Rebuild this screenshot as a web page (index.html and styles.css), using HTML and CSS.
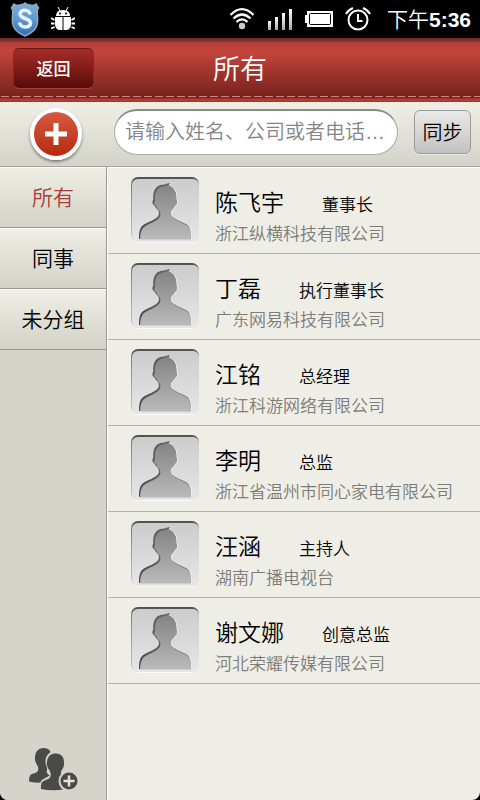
FILE: index.html
```html
<!DOCTYPE html>
<html lang="zh-CN">
<head>
<meta charset="utf-8">
<meta name="viewport" content="width=device-width, initial-scale=1">
<title>所有</title>
<link rel="stylesheet" href="styles.css">
</head>
<body>
<svg class="defs" aria-hidden="true">
  <defs>
    <linearGradient id="frame" x1="0" y1="0" x2="0" y2="1"><stop offset="0" stop-color="#cccccd"/><stop offset="1" stop-color="#e6e6e7"/></linearGradient>
    <linearGradient id="rim" x1="0" y1="0" x2="0" y2="1"><stop offset="0" stop-color="#4c4e4a"/><stop offset=".12" stop-color="#7f807f"/><stop offset="1" stop-color="#c8c8cb"/></linearGradient>
    <linearGradient id="person" x1="0" y1="0" x2="0" y2="1"><stop offset="0" stop-color="#848484"/><stop offset="1" stop-color="#bababb"/></linearGradient>
    <linearGradient id="edge" x1="0" y1="0" x2="1" y2="0"><stop offset="0" stop-color="#4a4a4a"/><stop offset=".6" stop-color="#6a6a6a"/><stop offset="1" stop-color="#8b8b8b"/></linearGradient>
    <linearGradient id="shield" x1="0" y1="0" x2="0" y2="1"><stop offset="0" stop-color="#79aedb"/><stop offset=".5" stop-color="#5f98d0"/><stop offset="1" stop-color="#2f6bb2"/></linearGradient>
    <linearGradient id="bars" x1="0" y1="0" x2="0" y2="1"><stop offset="0" stop-color="#fff"/><stop offset="1" stop-color="#aaa"/></linearGradient>
    <path id="bust" d="M8 62 C8 54 9 50 13 47.500 C19 44 27 42 28 37 Q28.500 34 26 32 Q24 30 23.500 28.500 C21 27.500 21 24 22.300 23 C21.500 12 26 7.500 33 7.500 Q36 6 39.500 6 L37.500 8.500 C43.500 10.500 45.800 16 45.300 23 C46.500 24 46 28 44 28.500 Q43 31 41 32.500 Q39 34 39.500 37 C41 42 50 44 56 47.500 C59.500 50 60 55 60 62 Z"/>
    <symbol id="avatar" viewBox="0 0 68 66">
      <rect x="0" y="1" width="68" height="65" rx="7" fill="#fafaf7"/>
      <rect x="0" y="0" width="68" height="65" rx="7" fill="url(#rim)"/>
      <rect x="1" y="2" width="67" height="63" rx="6" fill="url(#frame)"/>
      <use href="#bust" x="1" y="0" fill="#f0f0f1"/>
      <use href="#bust" fill="url(#edge)"/>
      <path d="M9 62.500 C9.500 55 10.500 51.500 14.500 49 C20.500 45.500 28.500 43.500 29.500 38 Q30 35 27.500 33 Q25.500 31 25 29 C22.800 28 22.800 25 24 24 C23 14 27 9.500 34 9 Q37 8 38 8.500 C43.500 10.500 45.800 16 45.300 23 C46.500 24 46 28 44 28.500 Q43 31 41 32.500 Q39 34 39.500 37 C41 42.500 50 45 55.500 48.500 C59.500 51 60 56 60 62.500 Z" fill="url(#person)"/>
    </symbol>
  </defs>
</svg>

<div class="status">
  <svg width="30" height="36" viewBox="0 0 30 36" aria-hidden="true">
    <path d="M4 3 Q7 5 10 4 Q13 4 15 2 Q17 4 20 4 Q23 5 26 3 L28.500 7 Q26.500 9 27.500 15 C28.500 25 26 30 15 35 C4 30 1.500 25 2.500 15 Q3.500 9 1.500 7 Z" fill="url(#shield)" stroke="#92a9bb" stroke-width="1.500"/>
    <path d="M20 13.500 C20 8 10 8 10 13 C10 18 20.500 17 20.500 22 C20.500 27.500 10 27.500 9.500 21.500" fill="none" stroke="#e9f1f8" stroke-width="3.600"/>
  </svg>
  <svg class="bug" width="24" height="24" viewBox="0 0 24 24" fill="#fff" aria-hidden="true">
    <path d="M5 9 Q5 3 12 3 Q19 3 19 9 Z"/><path d="M4 10 H11.500 V23 H8 Q4 22 4 17 Z M12.500 10 H20 V17 Q20 22 16 23 H12.500 Z"/>
    <path d="M7 0 L9 4 M17 0 L15 4" fill="none" stroke="#fff"/>
    <path d="M3.500 13 L0 11 M3.500 16.500 H0 M3.500 20 L0 21.500 M20.500 13 L24 11 M20.500 16.500 H24 M20.500 20 L24 21.500" fill="none" stroke="#fff" stroke-width="1.800"/>
    <circle cx="9" cy="6.500" r="1" fill="#000"/><circle cx="15" cy="6.500" r="1" fill="#000"/>
  </svg>
  <div class="signals">
    <svg width="26" height="24" viewBox="0 0 26 24" fill="none" stroke="#fff" stroke-width="2.200" aria-hidden="true">
      <path d="M1.500 8 Q13 -3.500 24.500 8" /><path d="M4.500 11.500 Q13 3.500 21.500 11.500"/><path d="M7.500 15 Q13 9.500 18.500 15"/><circle cx="13" cy="19" r="3.200" fill="#ccc" stroke="none"/>
    </svg>
    <svg width="26" height="22" viewBox="0 0 26 22" fill="url(#bars)" aria-hidden="true"><rect x="1" y="13" width="3" height="9"/><rect x="8" y="9" width="3" height="13"/><rect x="15" y="5" width="3" height="17"/><rect x="22" y="1" width="3" height="21"/></svg>
    <svg width="28" height="18" viewBox="0 0 28 18" aria-hidden="true"><path d="M2 1H28V17H2V13H0V5H2Z" fill="#fff"/><rect x="4.500" y="3.500" width="21" height="11" rx="1" fill="#fff" stroke="#000"/></svg>
    <svg width="26" height="24" viewBox="0 0 26 24" fill="none" stroke="#fff" stroke-width="2" aria-hidden="true"><circle cx="13" cy="13" r="9.500"/><path d="M13 7V14H17.500"/><path d="M1 7Q3 3 8 1M25 7Q23 3 18 1"/></svg>
  </div>
  <div class="clock">下午<b>5:36</b></div>
</div>

<div class="app">
  <header class="header">
    <button class="back" type="button">返回</button>
    <h1>所有</h1>
  </header>

  <div class="toolbar">
    <div class="add-cell">
      <button class="add" type="button" aria-label="添加">
        <svg width="22" height="22" viewBox="0 0 22 22" aria-hidden="true"><path d="M8.500 0H13.500V8.500H22V13.500H13.500V22H8.500V13.500H0V8.500H8.500Z" fill="#fff"/></svg>
      </button>
    </div>
    <input class="search" type="text" aria-label="搜索" placeholder="请输入姓名、公司或者电话…">
    <button class="sync" type="button">同步</button>
  </div>

  <div class="main">
    <nav class="side">
      <a class="group active" href="#all">所有</a>
      <a class="group" href="#colleagues">同事</a>
      <a class="group" href="#ungrouped">未分组</a>
      <button class="add-group" type="button" aria-label="添加分组">
        <svg width="50" height="44" viewBox="0 0 50 44" aria-hidden="true">
          <path d="M9 22 Q10 19 7.500 16 Q5.500 13 6 9 C6.500 3 10 0 14.500 0 C18 0 20.500 1.500 21.500 4 C17 7 15.500 12 17 17 Q19 21 17.500 24 Q18.500 26 20.500 27.500 C18 30 12.500 30.500 11.500 34.500 Q5 35 0 33.500 Q0 28 2 26.500 C5 25 9 25 9 22 Z" fill="#4a4b49"/>
          <path d="M21.500 28 Q22.500 24 19.500 21 Q17 17 18 14 C18.500 8 22 5.500 27 5.500 C32 5.500 35 9 35 14 Q35.500 17 34 20 Q31.500 23 32 27 Q33 30 37 31 L37 41 Q24 43.500 12 41 Q11.500 35 14 33.500 C17 31.500 21 31.500 21.500 28 Z" fill="#4a4b49"/>
          <circle cx="40" cy="33" r="10.500" fill="#d5d4ca"/><circle cx="40" cy="33" r="8.500" fill="#4a4b49"/>
          <path d="M40 27.500V38.500M34.500 33H45.500" stroke="#e3e2dc" stroke-width="2.500"/>
        </svg>
      </button>
    </nav>
    <ul class="list">
      <li><svg class="avatar" aria-hidden="true"><use href="#avatar"/></svg><div class="info"><div class="line"><span class="name">陈飞宇</span><span class="role">董事长</span></div><div class="company">浙江纵横科技有限公司</div></div></li>
      <li><svg class="avatar" aria-hidden="true"><use href="#avatar"/></svg><div class="info"><div class="line"><span class="name">丁磊</span><span class="role">执行董事长</span></div><div class="company">广东网易科技有限公司</div></div></li>
      <li><svg class="avatar" aria-hidden="true"><use href="#avatar"/></svg><div class="info"><div class="line"><span class="name">江铭</span><span class="role">总经理</span></div><div class="company">浙江科游网络有限公司</div></div></li>
      <li><svg class="avatar" aria-hidden="true"><use href="#avatar"/></svg><div class="info"><div class="line"><span class="name">李明</span><span class="role">总监</span></div><div class="company">浙江省温州市同心家电有限公司</div></div></li>
      <li><svg class="avatar" aria-hidden="true"><use href="#avatar"/></svg><div class="info"><div class="line"><span class="name">汪涵</span><span class="role">主持人</span></div><div class="company">湖南广播电视台</div></div></li>
      <li><svg class="avatar" aria-hidden="true"><use href="#avatar"/></svg><div class="info"><div class="line"><span class="name">谢文娜</span><span class="role">创意总监</span></div><div class="company">河北荣耀传媒有限公司</div></div></li>
    </ul>
  </div>
</div>
</body>
</html>
```
FILE: styles.css
```css
* { box-sizing: border-box; }

body {
  margin: 0;
  min-height: 100vh;
  display: flex;
  flex-direction: column;
  background: #000;
  color: #000;
  font-family: "Liberation Sans", "Noto Sans CJK SC", sans-serif;
  font-weight: 350;
}

button, input { font: inherit; margin: 0; padding: 0; border: 0; }
button { cursor: pointer; }
svg { display: block; flex: none; }
.defs { position: absolute; width: 0; height: 0; }

.status {
  height: 38px;
  display: flex;
  align-items: center;
  padding: 0 9px 0 10px;
  color: #fff;
}
.bug { margin-left: 11px; }
.signals {
  margin-left: auto;
  display: flex;
  align-items: center;
  gap: 12px;
}
.clock { margin-left: 16px; padding-top: 2px; font-size: 21px; line-height: 36px; }
.clock b { font-weight: 700; }

.app {
  flex: 1;
  display: flex;
  flex-direction: column;
  overflow: hidden;
  border-radius: 0 0 8px 8px;
  background: #efeee6;
}

.header {
  position: relative;
  height: 64px;
  display: flex;
  align-items: center;
  justify-content: center;
  color: #fff;
  background: linear-gradient(#702d2b 0, #702d2b 2px, #b73e35 5px, #c4453b 14px, #a0342d 34px, #7b231e 57px, #7b231e 60px, #b94038 61px, #a8352e 64px);
}
.header::after {
  content: "";
  position: absolute;
  inset: auto 0 5px 1px;
  height: 1px;
  background: repeating-linear-gradient(90deg, #cf8680 0, #cf8680 8px, transparent 8px, transparent 11px);
}
.header h1 {
  margin: 0;
  font-size: 27px;
  line-height: 40px;
  font-weight: 350;
}
.back {
  position: absolute;
  left: 13px;
  top: 10px;
  width: 81px;
  height: 41px;
  padding-bottom: 2px;
  border: 1px solid #8b2823;
  border-top-color: #641713;
  border-bottom-color: #a84139;
  border-radius: 6px;
  background: linear-gradient(#a42d28, #811c18 50%, #560c09);
  color: #fff;
  font-size: 17px;
  font-weight: 500;
}

.toolbar {
  height: 65px;
  display: flex;
  align-items: center;
  padding: 0 9px 4px 0;
  border-bottom: 1px solid #a3a39b;
  background: linear-gradient(#f0efe5, #d3d3c9);
}
.add-cell {
  width: 114px;
  padding: 4px 0 0 30px;
}
.add {
  width: 52px;
  height: 52px;
  display: flex;
  align-items: center;
  justify-content: center;
  border: 4px solid #fff;
  border-radius: 50%;
  background: linear-gradient(#d85a42, #b52a10);
  box-shadow: 0 2px 3px #7b7b75;
}
.search {
  flex: 1;
  min-width: 0;
  height: 46px;
  padding: 0 10px;
  border: 1px solid #aaaaa5;
  border-top: 2px solid #8a8a87;
  border-radius: 23px;
  background: #fff;
  font-size: 20px;
}
.search::placeholder { color: #858585; opacity: 1; }
.sync {
  width: 57px;
  height: 44px;
  margin-left: 16px;
  padding-bottom: 2px;
  border: 1px solid #9a9a98;
  border-radius: 6px;
  background: linear-gradient(#e9e9e9, #c2c2c0);
  box-shadow: 0 1px 0 #eeeee8;
  font-size: 20px;
}

.main { flex: 1; display: flex; }
.side {
  width: 107px;
  display: flex;
  flex-direction: column;
  border-right: 1px solid #999994;
  background: #d5d4ca;
}
.group {
  height: 61px;
  display: flex;
  align-items: center;
  justify-content: center;
  padding-bottom: 3px;
  border-top: 1px solid #fbfbf5;
  border-bottom: 1px solid #999994;
  background: linear-gradient(#efeee4, #d2d2c8);
  color: #000;
  font-size: 21px;
  text-decoration: none;
}
.group.active { color: #ad3a34; }
.add-group {
  margin: auto 0 8px;
  padding-left: 29px;
  background: none;
}

.list {
  flex: 1;
  min-width: 0;
  margin: 0;
  padding: 0;
  list-style: none;
  border-left: 1px solid #fff;
  border-top: 1px solid #fff;
}
.list li {
  height: 86px;
  display: flex;
  padding: 9px 8px 0 23px;
  border-bottom: 1px solid #b2b2ab;
}
.avatar { width: 68px; height: 66px; }
.info { margin-left: 16px; padding-top: 10px; white-space: nowrap; }
.line { display: flex; align-items: baseline; line-height: 32px; }
.name { font-size: 23px; }
.role { margin-left: 38px; font-size: 17px; }
.company { font-size: 17px; line-height: 26px; color: #7c7c78; }
```
